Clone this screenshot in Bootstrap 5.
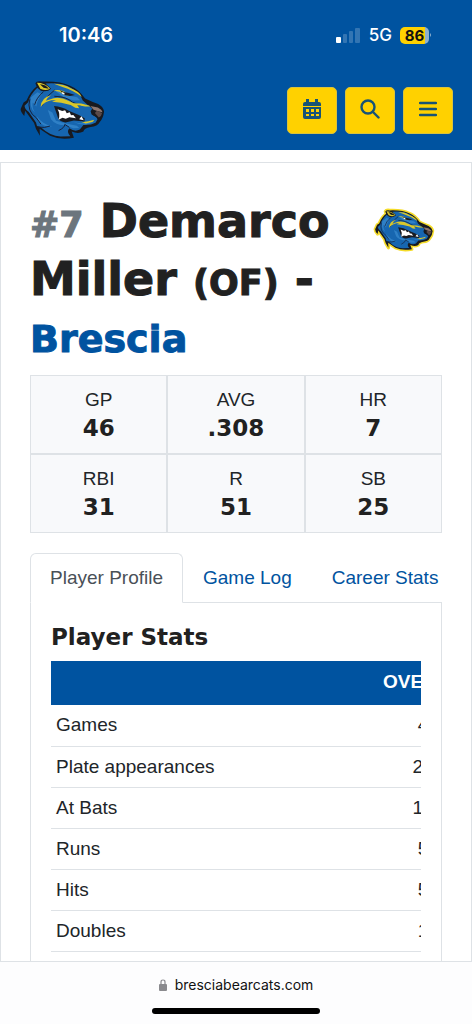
<!DOCTYPE html>
<html lang="en">
<head>
<meta charset="utf-8">
<meta name="viewport" content="width=device-width, initial-scale=1">
<title>Demarco Miller - Brescia</title>
<link href="https://cdn.jsdelivr.net/npm/bootstrap@5.3.0/dist/css/bootstrap.min.css" rel="stylesheet">
<style>
  :root { --team-blue: #0053a0; --team-gold: #ffd100; --line: #dee2e6; }
  body { font-family: "Liberation Sans", Arial, sans-serif; font-size: 19px; line-height: 29px; color: #212529; }
  .phone-text { font-family: Inter, sans-serif; }
  .heavy { font-family: "DejaVu Sans", Verdana, sans-serif; font-weight: 700; color: #212121; }
  .site-header { background: var(--team-blue); height: 150px; }
  .status-bar { height: 70px; padding: 0 40px 0 59px; }
  .clock { font-size: 20px; font-weight: 600; }
  .network { font-size: 17px; font-weight: 500; }
  .battery { width: 29px; height: 17px; border-radius: 5px; font-size: 15px; line-height: 17px; font-weight: 700; color: #111; background: linear-gradient(90deg, var(--team-gold) 86%, #8eb1ce 86%); }
  .toolbar-row { padding: 9px 19px 0 19px; }
  .btn-gold { --bs-btn-bg: var(--team-gold); --bs-btn-border-color: #d9c23c; --bs-btn-hover-bg: #e6bc00; width: 50px; height: 47px; border-radius: 5px; padding: 0 0 4px; }
  .scroller { scrollbar-width: none; }
  .scroller::-webkit-scrollbar, .table-clip::-webkit-scrollbar { display: none; }
  .table-clip { scrollbar-width: none; }
  .player-card { margin-top: 12px; border: 1px solid var(--line); padding: 29px 29px 0; }
  .player-name { font-size: 46px; line-height: 58px; }
  .player-name small { font-size: 35px; line-height: 1; font-weight: 700; }
  .player-name .jersey { color: #6c757d; }
  .player-name, .team-link { -webkit-text-stroke: 1px currentColor; }
  .team-link { font-size: 38px; line-height: 62px; color: var(--team-blue); }
  .summary { background: #f8f9fb; margin-top: 5px; }
  .summary .col-4 { border: 1px solid var(--line); padding: 9px 0 10px; height: 79px; }
  .summary dt { font-weight: 400; line-height: 29px; }
  .summary dd { font-size: 23px; line-height: 29px; margin: 0; }
  .player-tabs { margin-top: 20px; --bs-nav-tabs-border-color: var(--line); }
  .player-tabs .nav-link { padding: 9px 19px 10px; line-height: 29px; color: var(--team-blue); white-space: nowrap; }
  .player-tabs .nav-link.active { color: #495057; }
  .player-tabs .nav-item:last-child .nav-link { padding-right: 2px; }
  .tab-pane-box { border: 1px solid var(--line); border-top: 0; padding: 20px 20px 40px; }
  .section-title { font-size: 23px; line-height: 28px; margin-bottom: 10px; }
  .stats td, .stats th { padding: 6px 5px; line-height: 28px; height: 41px; border-color: var(--line); white-space: nowrap; }
  .stats tbody th { font-weight: 400; min-width: 327px; }
  .stats thead th { background: var(--team-blue); color: #fff; height: 44px; border: 0; padding: 7px 5px 9px; }
  .address-bar { border-top: 1px solid var(--line); background: #fdfdfe; height: 63px; padding-top: 11px; }
  .address { font-size: 14px; line-height: 24px; color: #111; }
  .home-bar { width: 168px; height: 6px; border-radius: 3px; background: #000; margin-top: 11px; }
  .crest { color: transparent; }
  .crest-gold { color: #f5dc2a; }
  .halo { fill: currentColor; stroke: currentColor; stroke-width: 14; stroke-linejoin: round; }
</style>
</head>
<body class="bg-white">
<svg width="0" height="0" class="position-absolute" aria-hidden="true">
  <symbol id="bearcat" viewBox="24 28 266 188" overflow="visible">
    <path class="halo" d="M47 93Q59 64 78 50L74 40Q78 32 94 35Q151 33 180 48Q207 59 226 87Q249 98 266 104Q281 112 284 126Q282 147 271 159Q264 173 243 174Q222 177 221 188Q205 197 185 188L192 207Q150 215 119 201L87 179L88 201Q74 182 70 162L43 124L40 140Q29 129 29 119L38 99Z"/>
    <path fill="#181a20" d="M47 93Q59 64 78 50L74 40Q78 32 94 35Q151 33 180 48Q207 59 226 87Q249 98 266 104Q281 112 284 126Q282 147 271 159Q264 173 243 174Q222 177 221 188Q205 197 185 188L192 207Q150 215 119 201L87 179L88 201Q74 182 70 162L43 124L40 140Q29 129 29 119L38 99Z"/>
    <path fill="#1766b0" d="M80 54Q58 75 52 98L41 109Q41 119 54 128L76 160L79 171L90 174Q119 202 151 203L181 202Q168 189 178 178Q194 190 210 182L221 168Q244 169 258 161L266 147L246 136L243 126L249 116L236 108L219 93L211 76Q188 52 157 43Q130 38 105 41L122 57Q110 69 91 63Z"/>
    <path fill="#2f80c6" d="M61 83L80 68L94 74Q79 92 77 111L66 99Q63 116 73 130Q54 115 61 83M135 64L155 62L169 77L202 83L211 92L192 93L161 83ZM191 159Q219 167 252 158Q235 170 205 164ZM78 140Q94 164 125 172Q104 178 82 156M112 122L126 130L137 155L171 164L201 170L208 177L190 178L165 169Q135 168 122 150Z"/>
    <path fill="none" stroke="#14213c" stroke-width="3" d="M99 66Q76 86 72 106M133 61L115 77Q103 85 101 99L94 109M57 89Q47 126 77 146L91 165M82 174Q103 178 119 171M145 185Q164 176 164 166L178 175M132 80Q170 81 187 98L213 108"/>
    <path fill="#d9c72b" d="M79 39Q103 39 119 56Q108 65 89 57ZM131 42Q162 43 181 55Q210 66 216 82Q190 62 157 52ZM129 62Q153 57 169 70L177 79L163 75L148 66ZM90 113Q92 84 122 77Q109 85 106 94L118 90Q145 77 175 94L191 101L214 102L249 111L226 111L202 107L208 117L196 115L182 107L153 100L125 97L137 92L123 92Q102 96 90 113M213 158Q231 160 254 152L250 158L228 163Z"/>
    <path fill="#181a20" d="M88 43Q107 44 115 57L99 54ZM149 61Q159 68 176 70L195 76L180 79L162 76ZM131 110Q155 112 176 124L207 137L225 147L224 157L192 154L166 160Q147 158 143 145ZM238 108L266 108Q281 115 282 130Q277 148 264 151Q262 142 251 138L246 127L253 123Z"/>
    <path fill="#fff" d="M142 120L156 125L165 123L170 132L179 129L183 138L190 137L198 147L178 144L167 149L157 146L145 152Q151 135 142 120M215 141L222 153L208 150ZM155 67L163 70L163 75L156 72Z"/>
    <path fill="#8e7770" d="M242 110L265 114Q278 121 279 129L266 126L252 121Z"/>
    <path fill="#5b4a48" d="M262 124L278 131Q277 140 268 145L256 131Z"/>
  </symbol>
</svg>
<div class="vh-100 d-flex flex-column overflow-hidden">
  <header class="site-header flex-shrink-0 text-white">
    <div class="status-bar phone-text d-flex align-items-center">
      <span class="clock me-auto">10:46</span>
      <svg width="25" height="17" viewBox="0 0 25 17" fill="#fff" aria-label="Signal"><rect x="0" y="10" width="5" height="6" rx="1"/><g opacity=".2"><rect x="7" y="7" width="4" height="9" rx="1"/><rect x="13" y="4" width="4" height="12" rx="1"/><rect x="19" y="1" width="5" height="15" rx="1"/></g></svg>
      <span class="network ms-2">5G</span>
      <span class="battery ms-2 text-center">86</span><svg width="3" height="6" viewBox="0 0 3 6"><path fill="#8eb1ce" d="M1 1q2 2 0 4z"/></svg>
    </div>
    <div class="toolbar-row d-flex align-items-start">
      <a href="#" class="me-auto d-block lh-1" aria-label="Brescia Bearcats home"><svg class="crest" width="87" height="62"><use href="#bearcat"/></svg></a>
      <div class="d-flex gap-2 mt-2 align-items-center">
        <button type="button" class="btn btn-gold" aria-label="Calendar"><svg width="18" height="20" viewBox="0 0 18 20"><path fill="#175376" d="M3 0h3v3h6V0h3v3h1q2 0 2 2v2H0V5q0-2 2-2h1zM0 8h18v10q0 2-2 2H2q-2 0-2-2z"/><path fill="#ffd100" d="M3 10h3v3H3zm5 0h3v3H8zm5 0h3v3h-3zM3 15h3v2H3zm5 0h3v2H8zm5 0h3v2h-3z"/></svg></button>
        <button type="button" class="btn btn-gold" aria-label="Search"><svg width="20" height="20" viewBox="0 0 20 20" fill="none" stroke="#175376" stroke-width="2.4" stroke-linecap="round"><circle cx="8" cy="8" r="6.5"/><path d="M13 13l5.5 5.5"/></svg></button>
        <button type="button" class="btn btn-gold" aria-label="Menu"><svg width="18" height="18" viewBox="0 0 18 18" stroke="#175376" stroke-width="2.4" stroke-linecap="round"><path d="M1 3h16M1 9h16M1 15h16"/></svg></button>
      </div>
    </div>
  </header>

  <main class="scroller flex-grow-1 overflow-auto">
    <article class="player-card">
      <div class="d-flex justify-content-between align-items-start">
        <h1 class="player-name heavy mb-0"><small class="jersey">#7</small> Demarco<br>Miller <small>(OF)</small> -</h1>
        <svg class="crest-gold flex-shrink-0 mt-3 me-2" width="60" height="44" overflow="visible" aria-label="Brescia logo"><use href="#bearcat"/></svg>
      </div>
      <a href="#" class="team-link heavy d-block text-decoration-none">Brescia</a>
      <div class="summary">
        <div class="row g-0 text-center">
          <dl class="col-4 mb-0"><dt>GP</dt><dd class="heavy">46</dd></dl>
          <dl class="col-4 mb-0"><dt>AVG</dt><dd class="heavy">.308</dd></dl>
          <dl class="col-4 mb-0"><dt>HR</dt><dd class="heavy">7</dd></dl>
          <dl class="col-4 mb-0"><dt>RBI</dt><dd class="heavy">31</dd></dl>
          <dl class="col-4 mb-0"><dt>R</dt><dd class="heavy">51</dd></dl>
          <dl class="col-4 mb-0"><dt>SB</dt><dd class="heavy">25</dd></dl>
        </div>
      </div>
      <ul class="nav nav-tabs player-tabs flex-nowrap">
        <li class="nav-item"><a class="nav-link active" href="#" aria-current="page">Player Profile</a></li>
        <li class="nav-item"><a class="nav-link" href="#">Game Log</a></li>
        <li class="nav-item"><a class="nav-link" href="#">Career Stats</a></li>
      </ul>
      <section class="tab-pane-box">
        <h2 class="section-title heavy">Player Stats</h2>
        <div class="table-responsive table-clip">
          <table class="table stats mb-0">
            <thead><tr><th></th><th class="text-center" scope="col">OVERALL</th></tr></thead>
            <tbody>
              <tr><th scope="row">Games</th><td class="text-center">46</td></tr>
              <tr><th scope="row">Plate appearances</th><td class="text-center">220</td></tr>
              <tr><th scope="row">At Bats</th><td class="text-center">185</td></tr>
              <tr><th scope="row">Runs</th><td class="text-center">51</td></tr>
              <tr><th scope="row">Hits</th><td class="text-center">57</td></tr>
              <tr><th scope="row">Doubles</th><td class="text-center">12</td></tr>
            </tbody>
          </table>
        </div>
      </section>
    </article>
  </main>

  <footer class="address-bar phone-text flex-shrink-0">
    <div class="address d-flex justify-content-center align-items-center gap-2">
      <svg width="8" height="12" viewBox="0 0 8 12"><path fill="none" stroke="#8a8a8e" stroke-width="1.2" d="M2 6V3q0-2 2-2t2 2v3"/><rect y="5" width="8" height="7" rx="1" fill="#8a8a8e"/></svg>
      <span>bresciabearcats.com</span>
    </div>
    <div class="home-bar mx-auto"></div>
  </footer>
</div>
<script src="https://cdn.jsdelivr.net/npm/bootstrap@5.3.0/dist/js/bootstrap.bundle.min.js"></script>
</body>
</html>
